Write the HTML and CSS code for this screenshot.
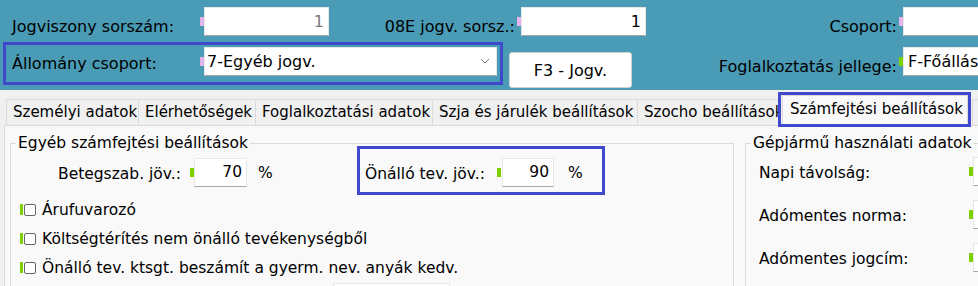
FILE: index.html
```html
<!DOCTYPE html>
<html lang="hu">
<head>
  <meta charset="UTF-8" />
  <title>Jogviszony - Számfejtési beállítások</title>
  <link rel="stylesheet" href="styles.css">
</head>
<body>

  <div class="top">
    <div class="top-row">
      <span class="lbl lbl-first">Jogviszony sorszám:</span>
      <span class="mark pink"></span>
      <div class="inp w125 num disabled">1</div>
      <span class="lbl lbl-right w188">08E jogv. sorsz.:</span>
      <span class="mark pink"></span>
      <div class="inp w125 num">1</div>
      <span class="lbl lbl-right w253">Csoport:</span>
      <span class="mark pink"></span>
      <div class="inp w100"></div>
    </div>

    <div class="top-row2">
      <div class="hl-main">
        <span class="lbl w188">Állomány csoport:</span>
        <span class="mark pink"></span>
        <div class="inp select">
          <span>7-Egyéb jogv.</span>
          <svg width="10" height="6" viewBox="0 0 10 6"><polyline points="1,1 5,5 9,1" fill="none" stroke="#777" stroke-width="1"/></svg>
        </div>
      </div>
      <button class="btn">F3 - Jogv.</button>
      <div class="field-right">
        <span class="lbl lbl-right w267">Foglalkoztatás jellege:</span>
        <span class="mark green"></span>
        <div class="inp w100">F-Főállás</div>
      </div>
    </div>
  </div>

  <div class="tabs">
    <div class="tab t1">Személyi adatok</div>
    <div class="tab t2">Elérhetőségek</div>
    <div class="tab t3">Foglalkoztatási adatok</div>
    <div class="tab t4">Szja és járulék beállítások</div>
    <div class="tab t5">Szocho beállítások</div>
    <div class="hl-tab">
      <div class="tab active">Számfejtési beállítások</div>
    </div>
    <div class="tab t7">Statisztika</div>
  </div>

  <div class="panel">
    <div class="group group-left">
      <div class="group-title">Egyéb számfejtési beállítások</div>

      <div class="pct-row">
        <div class="pair">
          <span class="f-lbl">Betegszab. jöv.:</span>
          <span class="mark green"></span>
          <div class="inp w53 num">70</div>
          <span class="pct pct-first">%</span>
        </div>
        <div class="hl-box">
          <span class="f-lbl">Önálló tev. jöv.:</span>
          <span class="mark green"></span>
          <div class="inp w52 num gap1">90</div>
          <span class="pct">%</span>
        </div>
      </div>

      <div class="chk-row"><span class="mark green tall"></span><span class="chk"></span>Árufuvarozó</div>
      <div class="chk-row"><span class="mark green tall"></span><span class="chk"></span>Költségtérítés nem önálló tevékenységből</div>
      <div class="chk-row"><span class="mark green tall"></span><span class="chk"></span>Önálló tev. ktsgt. beszámít a gyerm. nev. anyák kedv.</div>
      <div class="last-row"><div class="inp w117"></div></div>
    </div>

    <div class="group group-right">
      <div class="group-title">Gépjármű használati adatok</div>
      <div class="car-row first">
        <span class="car-lbl">Napi távolság:</span>
        <span class="mark green"></span>
        <div class="inp w100"></div>
      </div>
      <div class="car-row">
        <span class="car-lbl">Adómentes norma:</span>
        <span class="mark green"></span>
        <div class="inp w100"></div>
      </div>
      <div class="car-row">
        <span class="car-lbl">Adómentes jogcím:</span>
        <span class="mark green"></span>
        <div class="inp w100"></div>
      </div>
    </div>
  </div>

</body>
</html>
```

FILE: styles.css
```css
* {
  box-sizing: border-box;
}

html, body {
  margin: 0;
  padding: 0;
}

body {
  width: 978px;
  height: 286px;
  overflow: hidden;
  font-family: "DejaVu Sans", Verdana, sans-serif;
  font-size: 15px;
  color: #000;
  background: #f0f0f0;
}

/* top header area */
.top {
  background: #4a9bb5;
  height: 90px;
  padding-top: 7px;
  font-size: 16px;
  white-space: nowrap;
  overflow: hidden;
}

.top-row {
  display: flex;
  align-items: center;
  height: 29px;
}

.top-row .lbl {
  margin-top: 10px; /* labels sit lower than the field centre */
}

.top-row2 {
  display: flex;
  align-items: flex-start;
  margin-top: 6px;
}

.lbl {
  flex: none;
}

.lbl-first {
  margin-left: 12px;
  width: 188px;
}

.lbl-right {
  text-align: right;
  padding-right: 2px;
}

.w188 { width: 188px; }
.w253 { width: 253px; }
.w267 { width: 267px; }

.mark {
  flex: none;
  width: 4px;
  height: 9px;
}

.pink { background: #e2b6ea; }
.green { background: #7fd000; }

.inp {
  flex: none;
  height: 29px;
  background: #fff;
  border: 1px solid #e6e6e6;
  border-bottom-color: #a6a6a6;
  padding: 0 4px;
  line-height: 27px;
  overflow: hidden;
  white-space: nowrap;
}

.num { text-align: right; }
.disabled { color: #7a7a7a; }

.w125 { width: 125px; }
.w100 { width: 100px; }
.w53 { width: 53px; }
.w52 { width: 52px; }
.w117 { width: 117px; }
.gap1 { margin-left: 1px; }

.hl-main {
  display: flex;
  align-items: center;
  width: 500px;
  height: 43px;
  margin-left: 3px;
  border: 3px solid #4048cc;
  padding: 2px 3px 6px 6px;
}

.hl-main .lbl {
  margin-top: 4px;
}

.select {
  width: 293px;
  display: flex;
  align-items: center;
  justify-content: space-between;
  padding: 0 6px 0 2px;
}

.select svg {
  margin-top: -2px;
}

.btn {
  flex: none;
  margin: 10px 0 0 6px;
  width: 123px;
  height: 36px;
  background: #fff;
  border: 1px solid #d2d2d2;
  border-radius: 3px;
  font-family: inherit;
  font-size: 16px;
  color: #000;
  padding: 0;
}

.field-right {
  display: flex;
  align-items: center;
  margin-top: 5px;
}

.field-right .lbl {
  margin-top: 9px;
}

/* tabs */
.tabs {
  display: flex;
  align-items: flex-end;
  height: 26px;
  margin-top: 9px;
  padding-left: 6px;
  white-space: nowrap;
}

.tab {
  flex: none;
  height: 26px;
  border: 1px solid #dadada;
  border-bottom: none;
  border-right: none;
  background: #f0f0f0;
  padding-left: 6px;
  line-height: 24px;
  overflow: hidden;
}

.t1 { width: 132px; }
.t2 { width: 117px; }
.t3 { width: 177px; }
.t4 { width: 205px; }
.t5 { width: 141px; }
.t7 { width: 60px; margin-left: 1px; }

.hl-tab {
  position: relative;
  z-index: 2;
  flex: none;
  width: 193px;
  height: 35px;
  margin-bottom: -2px;
  border: 3px solid #4048cc;
  align-self: flex-end;
}

.tab.active {
  width: 186px;
  height: 29px;
  margin-left: 1px;
  border-right: 1px solid #dadada;
  background: #f9f9f9;
  padding-left: 7px;
  line-height: 27px;
}

/* panel */
.panel {
  display: flex;
  align-items: flex-start;
  margin-left: 4px;
  height: 170px;
  border: 1px solid #dadada;
  border-right: none;
  background: #f9f9f9;
  padding-top: 17px;
  font-size: 15.5px;
  white-space: nowrap;
}

.group {
  flex: none;
  border: 1px solid #dcdcdc;
  height: 160px;
}

.group-left {
  width: 724px;
  margin-left: 5px;
}

.group-right {
  width: 240px;
  margin-left: 11px;
  border-right: none;
}

.group-title {
  width: fit-content;
  height: 18px;
  line-height: 18px;
  margin: -10px 0 -8px 5px;
  padding: 0 2px;
  background: #f9f9f9;
}

.pct-row {
  display: flex;
  align-items: center;
  height: 49px;
  margin-top: 2px;
  padding-left: 47px;
}

.pair {
  display: flex;
  align-items: center;
  padding-top: 4px;
}

.f-lbl {
  flex: none;
  width: 132px;
  padding-top: 3px;
}

.pct {
  margin-left: 14px;
}

.pct-first {
  margin-left: 11px;
  width: 99px;
}

.hl-box {
  display: flex;
  align-items: center;
  height: 49px;
  border: 3px solid #4048cc;
  padding: 4px 19px 0 5px;
}

.chk-row {
  display: flex;
  align-items: center;
  height: 29px;
  padding-left: 9px;
}

.mark.tall {
  width: 3px;
  height: 11px;
}

.chk {
  flex: none;
  width: 12px;
  height: 12px;
  margin: 0 6px 0 1px;
  border: 1px solid #666;
  border-radius: 2px;
  background: #fff;
}

.last-row {
  padding: 1px 0 0 322px;
}

.car-row {
  display: flex;
  align-items: center;
  height: 29px;
  margin-top: 14px;
}

.car-row.first {
  margin-top: 13px;
}

.car-lbl {
  flex: none;
  width: 223px;
  padding: 3px 0 0 13px;
}
```
